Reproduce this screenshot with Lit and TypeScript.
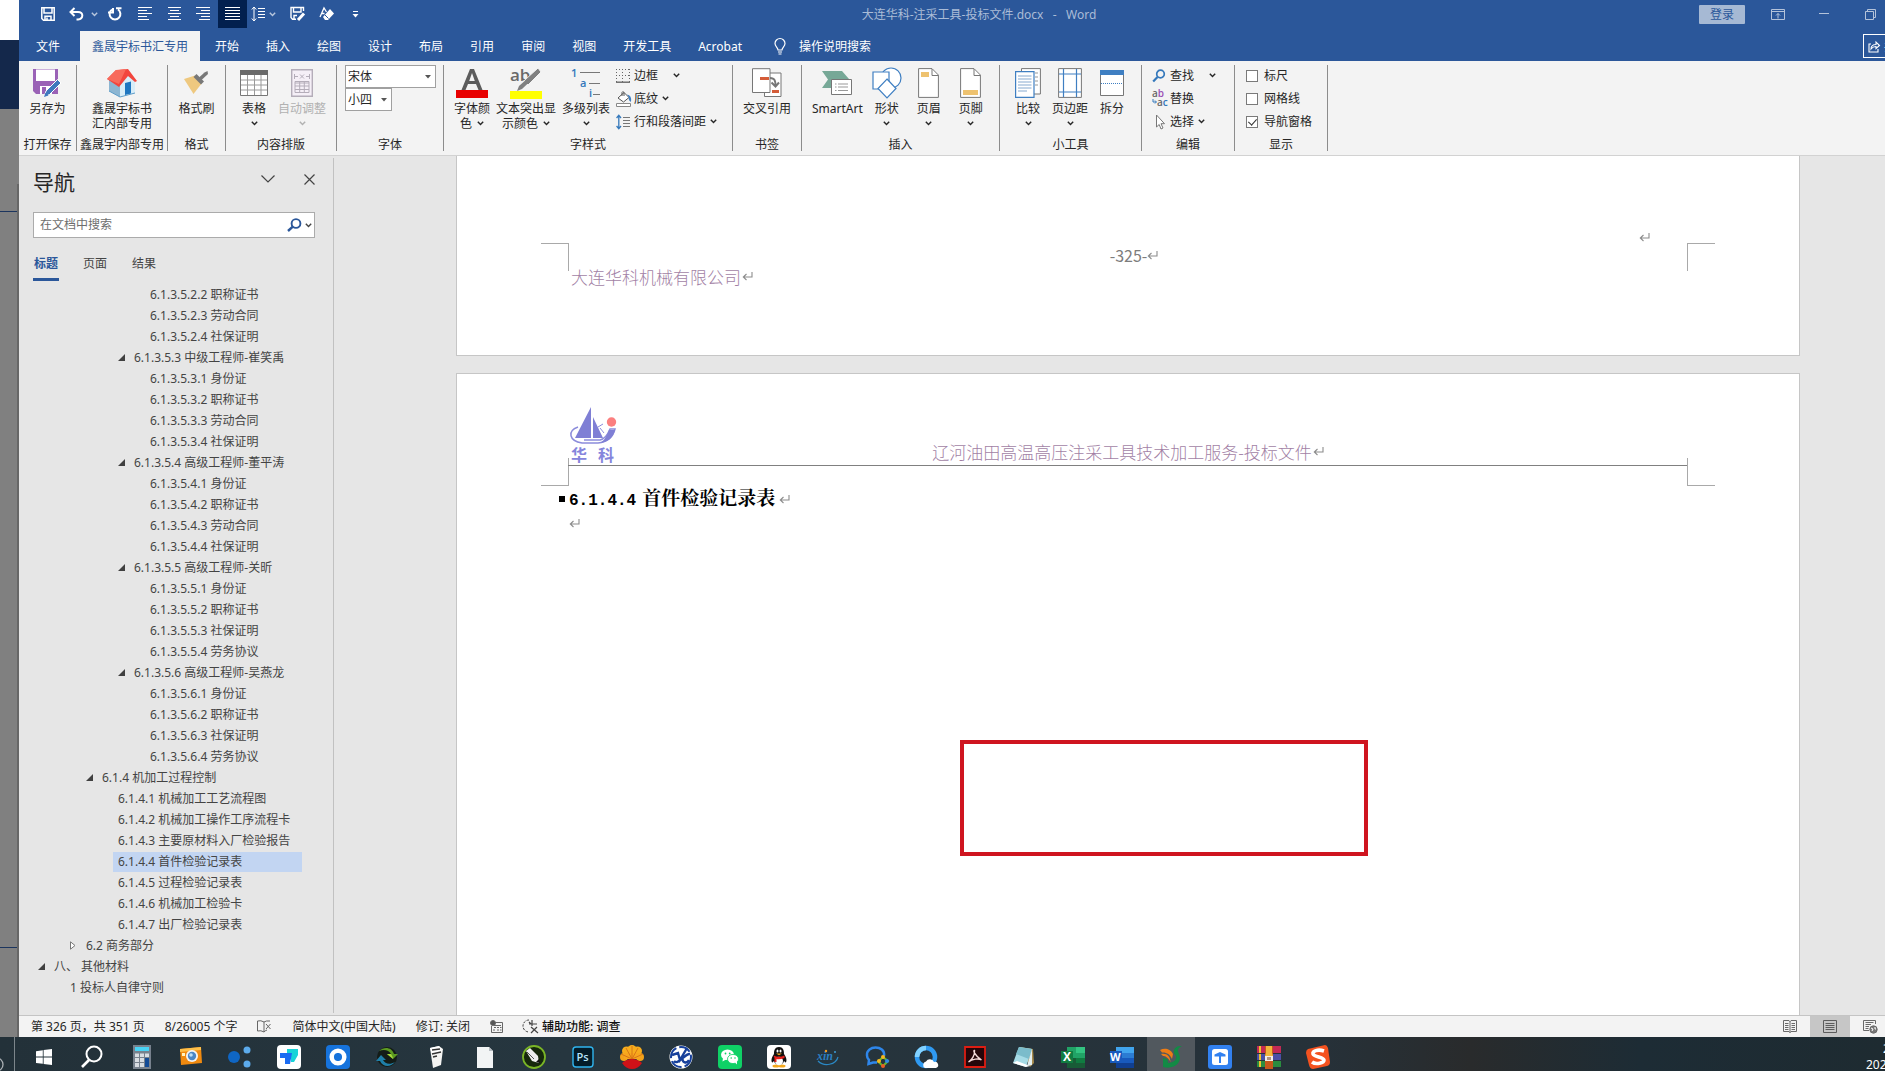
import { LitElement, html, css } from "lit";
import { customElement } from "lit/decorators.js";
import { classMap } from "lit/directives/class-map.js";

const chev = html`<svg class="chev" width="7" height="5" viewBox="0 0 7 5"><path d="M.8.8 3.5 3.6 6.2.8" fill="none" stroke="currentColor" stroke-width="1.4"/></svg>`;
const ret = html`<svg class="ret" width="11" height="11" viewBox="0 0 11 11"><path d="M10 1V6H1.5M4.5 3 1.3 6 4.5 9" fill="none" stroke="#8c8c8c" stroke-width="1.1"/></svg>`;

const lines = (rows: number[][]) => html`<svg width="15" height="14" viewBox="0 0 15 14" stroke="#fff" stroke-width="1">
  <path d=${rows.map(([a, b], i) => `M${a} ${i * 3 + 0.5}H${b}`).join("")} /></svg>`;

const quick = {
  save: html`<svg width="14" height="14" viewBox="0 0 14 14" fill="none" stroke="#fff"><path d="M.8.8H13.2V13.2H2.5L.8 11.5Z" stroke-width="1.5"/><path d="M3 1V6H11V1M4 13V9.3H10V13M6 10.5V13" stroke-width="1.5"/></svg>`,
  undo: html`<svg width="15" height="14" viewBox="0 0 15 14" fill="none" stroke="#fff" stroke-width="2"><path d="M5.5 1 1.5 5 5.5 9M1.5 5H9C15 5 14.500 12 9 12.500H7.500"/></svg>`,
  redo: html`<svg width="14" height="14" viewBox="0 0 14 14" fill="none" stroke="#fff" stroke-width="2"><path d="M4 2.500A5.400 5.400 0 1 0 10 2.500M5 1V5.500H0M8 1.200H13.500"/></svg>`,
  left: lines([[0, 14], [0, 9], [0, 14], [0, 9], [0, 11]]),
  center: lines([[1, 14], [3, 12], [1, 14], [3, 12], [1, 14]]),
  right: lines([[0, 14], [5, 14], [0, 14], [5, 14], [3, 14]]),
  justify: lines([[0, 15], [0, 15], [0, 15], [0, 15], [0, 15]]),
  spacing: html`<svg width="15" height="16" viewBox="0 0 15 16" fill="none" stroke="#fff"><path d="M3 1V15M.8 3.500 3 1 5.200 3.500M.8 12.500 3 15 5.200 12.500M7 2.500H14M7 5.500H14M7 8.500H14M7 11.500H14"/></svg>`,
  edit: html`<svg width="16" height="16" viewBox="0 0 16 16" fill="none" stroke="#fff"><path d="M6 13.200H2.500L1 11.500V1.500H13.500V5M3.500 2V6H11V2M4 13V9.500H7" stroke-width="1.400"/><path d="M8 14 14 7.500" stroke-width="3"/></svg>`,
  eraser: html`<svg width="16" height="15" viewBox="0 0 16 15"><path d="M11 2 15 6.500 9 13 6 13 4 10Z" fill="#fff"/><path d="M1 10 5 1 7.500 5M2.500 6.500H5.500" fill="none" stroke="#fff" stroke-width="1.300"/><path d="M6 8 9.500 11.500" stroke="#2b579a"/></svg>`,
  more: html`<svg width="7" height="7" viewBox="0 0 7 7"><path d="M1 .5H6" stroke="#fff"/><path d="M.5 3H6.500L3.500 6.500Z" fill="#fff"/></svg>`,
};

const rib = {
  saveAs: html`<svg width="30" height="30" viewBox="0 0 30 30"><path d="M1 1H26V26H4L1 23Z" fill="#9a62b6"/><path d="M4 1.500H23V13H4ZM8 18H20V26H8Z" fill="#fff"/><path d="M10 19H14V26H10Z" fill="#9a62b6"/><path d="M12 29 14 23 25.500 11.500 29 15 17.500 26.500Z" fill="#3f78bd" stroke="#fff" stroke-width="1"/><path d="M12 29 13.500 24.500 16.500 27.500Z" fill="#3f78bd"/></svg>`,
  house: html`<svg width="32" height="30" viewBox="0 0 32 30"><path d="M3 12V23L14 29V14L10 6Z" fill="#8db6d2"/><path d="M14 14 22 6 29 14V25L14 29Z" fill="#d8edf8"/><path d="M13 2 22 1 31 13 29 14 22 8 13 19 1 11 10 2Z" fill="#f2453d"/><path d="M10 2 20 1 13 16 1 11Z" fill="#f86a5c"/><path d="M19 27V15L25 13.500V25.500Z" fill="#1e76c0"/><path d="M3 23 14 29 29 25" fill="none" stroke="#5d9cc8"/></svg>`,
  brush: html`<svg width="28" height="26" viewBox="0 0 28 26"><path d="M2 9 13 5.500 20 13 11.500 24Z" fill="#eec87f"/><path d="M11.500 7 14.500 4 22 11.500 19 14.500Z" fill="#787878"/><path d="M17 7.500 22.500 2.500 25.500 1 26 4 19.500 10Z" fill="#787878"/></svg>`,
  table: html`<svg width="28" height="26" viewBox="0 0 28 26"><path d="M.5.5H27.500V25.500H.5Z" fill="#fff" stroke="#777"/><path d="M0 0H28V5H0Z" fill="#6a6a6a"/><path d="M7.500 5V25M14.500 5V25M21 5V25M1 10H27M1 15H27M1 20H27" stroke="#9a9a9a"/></svg>`,
  fit: html`<svg width="22" height="28" viewBox="0 0 22 28" fill="none" stroke="#b4adb9"><path d="M.7.7H21.300V27.300H.7Z" fill="#f5eff7" stroke-width="1.400"/><path d="M4 12.500H18V23.500H4ZM4 14H18M8.700 13V23M13.300 13V23M4 17H18M4 20.500H18M3.500 5V10M18.500 5V10M3.500 7.500H7M15 7.500H18.500M9 5.500 13 9.500M13 5.500 9 9.500"/></svg>`,
  fontColor: html`<svg width="32" height="30" viewBox="0 0 32 30"><path d="M5.500 22 14 1H18L26.500 22H22.500L20 16H12L9.500 22ZM13.200 13H18.800L16 5Z" fill="#5c5c5c"/><path d="M0 22H32V30H0Z" fill="#e80000"/></svg>`,
  highlight: html`<svg width="32" height="32" viewBox="0 0 32 32"><text x="0" y="14" font-family="Open Sans, sans-serif" font-size="17" font-weight="600" fill="#6a6a6a">ab</text><path d="M28 1 31 5 18 18 14 14Z" fill="#808080" stroke="#f3f3f3"/><path d="M27 3 29.500 5.500 12 22 7 24 9 19Z" fill="#808080"/><path d="M0 24H32V32H0Z" fill="#ffff00"/></svg>`,
  multi: html`<svg width="30" height="30" viewBox="0 0 30 30" font-family="Open Sans, sans-serif" font-weight="600" font-size="11" fill="#3478bb"><text x="0" y="9">1</text><text x="9" y="19">a</text><text x="18" y="29">i</text><path d="M9 4.500H29M18 15.500H29M22 26.500H29" stroke="#777"/></svg>`,
  cross: html`<svg width="30" height="30" viewBox="0 0 30 30"><path d="M12.500 5H29V28.500H12.500Z" fill="#fff" stroke="#777"/><path d="M.5.7H18V24.500H.5Z" fill="#fff" stroke="#777"/><path d="M8 9H17V12H8ZM20 22H27V25H20Z" fill="#d45c38"/><path d="M18 10C23 10 23.500 13 23.500 18M19.500 14.500 23.500 18.500 27 14.500" fill="none" stroke="#777" stroke-width="2"/></svg>`,
  smart: html`<svg width="30" height="26" viewBox="0 0 30 26"><path d="M0 1H20L27 9 20 18H0L6 9.500Z" fill="#77a897"/><path d="M9.500 9.500H29.500V24.500H9.500Z" fill="#fff" stroke="#777"/><path d="M13 14H14.500M16 14H26M13 17H14.500M16 17H26M13 20.500H14.500M16 20.500H26" stroke="#999"/></svg>`,
  shape: html`<svg width="30" height="32" viewBox="0 0 30 32" fill="#fff" stroke="#3f7fc2" stroke-width="1.200"><circle cx="19" cy="11" r="10"/><path d="M1 5H17V22H1Z"/><path d="M15 12 24 21.500 15 31 6 21.500Z"/></svg>`,
  head: html`<svg width="21" height="30" viewBox="0 0 21 30"><path d="M.6.6H14L20.400 7V29.400H.6Z" fill="#fff" stroke="#777"/><path d="M14 1V7.500H20" fill="none" stroke="#777"/><path d="M3 4H11V9H3Z" fill="#eec26f"/></svg>`,
  foot: html`<svg width="21" height="30" viewBox="0 0 21 30"><path d="M.6.6H14L20.400 7V29.400H.6Z" fill="#fff" stroke="#777"/><path d="M14 1V7.500H20" fill="none" stroke="#777"/><path d="M3 22H18V27H3Z" fill="#eec26f"/></svg>`,
  compare: html`<svg width="26" height="30" viewBox="0 0 26 30"><path d="M6.500.6H25.400V26H6.500Z" fill="#fff" stroke="#777"/><path d="M20 5H23M20 9H23M20 13H23M20 17H23" stroke="#999"/><path d="M.6 3.600H19V29.400H.6Z" fill="#fff" stroke="#3f7fc2" stroke-width="1.200"/><path d="M3 8H16.500M3 11H16.500M3 14H16.500M3 17H16.500M3 20H16.500M3 23H12" stroke="#86a9cf"/></svg>`,
  margins: html`<svg width="24" height="30" viewBox="0 0 24 30"><path d="M.6.6H23.400V29.400H.6Z" fill="#fff" stroke="#777"/><path d="M5.500 1V29M18.500 1V29M1 6H23M1 24H23" stroke="#3f7fc2" stroke-width="1.200"/></svg>`,
  split: html`<svg width="24" height="26" viewBox="0 0 24 26"><path d="M.5.5H23.500V25.500H.5Z" fill="#fff" stroke="#777"/><path d="M0 0H24V5H0Z" fill="#3f7fc2"/><path d="M1 13.500H23" stroke="#3f7fc2" stroke-dasharray="1 1"/></svg>`,
  border: html`<svg width="14" height="14" viewBox="0 0 14 14" fill="none" stroke="#666"><path d="M0 .5H14M0 6.500H14M.5 0V13M6.500 0V13M13.500 0V13" stroke-dasharray="1 2"/><path d="M0 13.200H14" stroke-width="1.400"/></svg>`,
  fill: html`<svg width="16" height="16" viewBox="0 0 16 16"><path d="M2 7 8 1.500 13 6.500 7.500 11Z" fill="#fff" stroke="#555"/><path d="M6 5V1.500Q7-.5 8 1.500V5" fill="none" stroke="#555"/><path d="M11 3.500Q16 4 15 11Q12 9 13 6.500Z" fill="#3f7fc2"/><path d="M.5 12.500H14.500V15.500H.5Z" fill="#fff" stroke="#888"/></svg>`,
  para: html`<svg width="15" height="16" viewBox="0 0 15 16" fill="none"><path d="M2.800 1V15M.6 4 2.800 1.200 5 4M.6 12 2.800 14.800 5 12" stroke="#3478bb" stroke-width="1.300"/><path d="M7 3.500H14M7 6.500H14M7 9.500H14M7 12.500H14" stroke="#777"/></svg>`,
  find: html`<svg width="14" height="14" viewBox="0 0 14 14" fill="none" stroke="#3478bb"><circle cx="8.500" cy="5" r="3.800" stroke-width="1.700"/><path d="M5.500 8 1.200 12.500" stroke-width="2.200"/></svg>`,
  replace: html`<svg width="17" height="17" viewBox="0 0 17 17" font-family="Open Sans, sans-serif" font-size="10" font-weight="600"><text x="0" y="7" fill="#666">a<tspan fill="#9a4fb5">b</tspan></text><text x="5" y="16" fill="#666">a<tspan fill="#3478bb">c</tspan></text><path d="M1 9V12H4M3 10.500 4.500 12 3 13.500" fill="none" stroke="#3478bb"/></svg>`,
  select: html`<svg width="14" height="16" viewBox="0 0 14 16"><path d="M4.500 1V13L7.200 10.500 9 15 11 14 9 9.700H12.500Z" fill="#fff" stroke="#777"/></svg>`,
};

const seg = (id: string) => {
  switch (id) {
    case "win": return html`<svg viewBox="0 0 24 24" fill="#fff"><path d="M4 6.200 10.800 5.200V11.600H4ZM11.600 5.100 20 4V11.600H11.600ZM4 12.400H10.800V18.800L4 17.900ZM11.600 12.400H20V20L11.600 18.900Z"/></svg>`;
    case "search": return html`<svg viewBox="0 0 24 24" fill="none" stroke="#fff"><circle cx="13" cy="9" r="7.500" stroke-width="2"/><path d="M8 15 1 22" stroke-width="2.600"/></svg>`;
    case "calc": return html`<svg viewBox="0 0 24 24"><path d="M3 0H21V24H3Z" fill="#77818d"/><path d="M5 2H19V6H5Z" fill="#49d3f5"/><path d="M5 8.500H9V12H5ZM10 8.500H14V12H10ZM15 8.500H19V12H15ZM5 13H9V17H5ZM10 13H14V17H10ZM5 18H9V22H5ZM10 18H14V22H10Z" fill="#d8dde2"/><path d="M15 13H19V22H15Z" fill="#124b96"/></svg>`;
    case "cam": return html`<svg viewBox="0 0 24 24"><path d="M1 4 22 2 23 18 2 20Z" fill="#f08a10"/><path d="M1 4 22 2V5L1 7Z" fill="#ffc04a"/><circle cx="13" cy="11" r="6" fill="#f3f3f3"/><circle cx="13" cy="11" r="4.200" fill="#4b86c6"/><circle cx="12" cy="10" r="1.800" fill="#b9dcf5"/><path d="M3 8H6V11H3Z" fill="#fff3c0"/></svg>`;
    case "nodes": return html`<svg viewBox="0 0 24 24"><circle cx="6" cy="12" r="6" fill="#0f66c4"/><circle cx="19" cy="5" r="3.500" fill="#5cabec"/><circle cx="19" cy="19" r="3.500" fill="#5cabec"/></svg>`;
    case "todesk": return html`<svg viewBox="0 0 24 24"><rect width="24" height="24" rx="4" fill="#fff"/><path d="M10 4H21V10L17 17H14V9H10Z" fill="#18d3d8"/><path d="M3 8H15L13 19H8V13H3Z" fill="#1b6cf2"/></svg>`;
    case "ring": return html`<svg viewBox="0 0 24 24"><rect width="24" height="24" rx="4" fill="#1673dc"/><circle cx="12" cy="12" r="6.300" fill="none" stroke="#fff" stroke-width="4.500"/><path d="M11 8H13V10H11ZM11 14H13V16H11Z" fill="#1673dc"/></svg>`;
    case "sync": return html`<svg viewBox="0 0 24 24"><circle cx="12" cy="12" r="10" fill="#141c17"/><path d="M4 6C9 1 17 2 19 9H23L18 14 12 9H16C14 5 9 4 4 6Z" fill="#5c9a22"/><path d="M12 9H16Q18 12 18 14Z" fill="#a6d83a"/><path d="M20 17C15 23 8 22 5 16H1L6 10 11 15H8C10 19 15 20 20 17Z" fill="#1f7fa8"/></svg>`;
    case "book": return html`<svg viewBox="0 0 24 24"><path d="M6 3 15 1 19 4 17 20 9 23Z" fill="#f4f4f2"/><path d="M6 3 15 1 18 6 8 9Z" fill="#fff"/><path d="M8 5 16 4M8 9 17 7M9 12 13 11" stroke="#333" stroke-width="1.400"/></svg>`;
    case "page": return html`<svg viewBox="0 0 24 24"><path d="M4 2H16L20 6V23H4Z" fill="#f2f4f5"/><path d="M16 2V6H20Z" fill="#b7bdc2"/></svg>`;
    case "corel": return html`<svg viewBox="0 0 24 24"><circle cx="12" cy="12" r="11" fill="#16280c" stroke="#7ab526" stroke-width="1.800"/><path d="M4 6 8 3 16 11 17 18 10 16Z" fill="#eee"/><path d="M17 14 18 18 14 17Z" fill="#111"/><path d="M5 7 12 14" stroke="#555"/></svg>`;
    case "ps": return html`<svg viewBox="0 0 24 24"><rect x="2" y="2" width="20" height="20" rx="3" fill="#041c28" stroke="#2fb4ee" stroke-width="1.400"/><text x="5.500" y="16" font-family="Open Sans, sans-serif" font-weight="600" font-size="11" fill="#b8e6fb">Ps</text></svg>`;
    case "petro": return html`<svg viewBox="0 0 24 24"><circle cx="4" cy="12" r="4" fill="#f3a21a"/><circle cx="6.500" cy="6" r="4.500" fill="#f7ac1d"/><circle cx="12" cy="4.500" r="4.500" fill="#f7ac1d"/><circle cx="17.500" cy="6" r="4.500" fill="#f7ac1d"/><circle cx="20" cy="12" r="4" fill="#f3a21a"/><path d="M4 8H20V14H4Z" fill="#f7a51d"/><path d="M12 14 6 3M12 14V1M12 14 18 3M12 14 1 9M12 14 23 9" stroke="#cf6a14" stroke-width=".8"/><path d="M2 18Q12 10 22 18Q18 24 12 24T2 18Z" fill="#d01218"/></svg>`;
    case "seal": return html`<svg viewBox="0 0 24 24"><circle cx="12" cy="12" r="11.500" fill="#fff"/><circle cx="12" cy="12" r="10" fill="none" stroke="#17409b" stroke-width="2" stroke-dasharray="12 3"/><path d="M3 10 9 8 11 15 18 3M5 16C9 21 16 8 21 9M14 12C12 18 18 19 20 15" fill="none" stroke="#17409b" stroke-width="2.400"/></svg>`;
    case "wechat": return html`<svg viewBox="0 0 24 24"><rect width="24" height="24" rx="4" fill="#0fd166"/><ellipse cx="9.500" cy="9.800" rx="6.500" ry="5.300" fill="#fff"/><path d="M5 13 4.500 16.500 9 14Z" fill="#fff"/><ellipse cx="15" cy="14" rx="5.500" ry="4.600" fill="#fff" stroke="#0fd166" stroke-width=".8"/><path d="M17 17.500 19 19.500V16Z" fill="#fff"/><circle cx="7.500" cy="8.500" r=".9" fill="#0fd166"/><circle cx="11.700" cy="8.500" r=".9" fill="#0fd166"/><circle cx="13.200" cy="13" r=".8" fill="#0fd166"/><circle cx="17" cy="13" r=".8" fill="#0fd166"/></svg>`;
    case "qq": return html`<svg viewBox="0 0 24 24"><rect width="24" height="24" rx="4" fill="#fff"/><ellipse cx="9" cy="21" rx="3.500" ry="1.500" fill="#f4a81c"/><ellipse cx="15" cy="21" rx="3.500" ry="1.500" fill="#f4a81c"/><path d="M12 2C7 2 7 7 7 9C4 13 4 17 5.500 17.500L7 16C8 21 16 21 17 16L18.500 17.500C20 17 20 13 17 9C17 7 17 2 12 2Z" fill="#111"/><ellipse cx="12" cy="16" rx="4" ry="4.300" fill="#fff"/><ellipse cx="10.500" cy="6" rx="1" ry="1.500" fill="#fff"/><ellipse cx="13.500" cy="6" rx="1" ry="1.500" fill="#fff"/><path d="M9 8.500H15L12 10.300Z" fill="#f4a81c"/><path d="M6.500 10.500Q12 13 17.500 10.500V13Q12 15 9.500 14V17H7.500V13Z" fill="#e8201c"/></svg>`;
    case "xin": return html`<svg viewBox="0 0 24 24"><text x="1" y="15" font-family="Liberation Serif, serif" font-style="italic" font-weight="700" font-size="12" fill="#2b7fc0">xin</text><path d="M2 16C8 22 20 20 22 12" fill="none" stroke="#2a88c4" stroke-width="1.200"/><circle cx="10" cy="6" r="1.200" fill="#f39a1e"/><circle cx="19" cy="7" r="1" fill="#3d9edb"/></svg>`;
    case "bubble": return html`<svg viewBox="0 0 24 24"><path d="M19 11C20 5 15 2.500 10.500 2.500S1.500 5.500 2 10.500C2 13 4 15 4 15L3.500 19 8 17.500H12" fill="none" stroke="#2e86ea" stroke-width="2.500"/><path d="M18 12 23 16 18 21 13 16.500Z" fill="none" stroke="#63b52f" stroke-width="2"/><circle cx="18" cy="12" r="2" fill="#f7b51e"/><circle cx="22" cy="16" r="2" fill="#2e86ea"/><circle cx="18" cy="21" r="2" fill="#ec5a25"/><circle cx="14" cy="16" r="2" fill="#f7b51e"/></svg>`;
    case "browser": return html`<svg viewBox="0 0 24 24"><circle cx="12" cy="12" r="9" fill="none" stroke="#2f9af2" stroke-width="4.500"/><path d="M3 12A9 9 0 0 1 12 3" fill="none" stroke="#82d2ff" stroke-width="4.500"/><path d="M11 23A3.500 3.500 0 0 1 12 16.500A4.500 4.500 0 0 1 20 17A3 3 0 0 1 22 23Z" fill="#fff"/></svg>`;
    case "pdf": return html`<svg viewBox="0 0 24 24"><path d="M2 2H22V22H2Z" fill="#25060a" stroke="#dd1d12" stroke-width="1.800"/><path d="M5.500 17C9 15 12 10 11.500 5.500C10 5 11 10 18.500 15C16 13 9 14 5.500 17Z" fill="none" stroke="#f5dada" stroke-width="1.400"/></svg>`;
    case "note": return html`<svg viewBox="0 0 24 24"><path d="M8 2 21 4 22 18 18 22Z" fill="#a58a4c"/><path d="M7 2 20 4 14 22 1 18Z" fill="#a5dbe6"/><path d="M7 2 20 4 17 14 4 9Z" fill="#7bbccb"/><path d="M1 18 14 22 18 21 5 16Z" fill="#fff"/><path d="M20 4 20 20 15 21Z" fill="#e3eef0"/></svg>`;
    case "excel": return html`<svg viewBox="0 0 24 24"><path d="M6 2H24V23H6Z" fill="#21a366"/><path d="M15 2H24V8H15Z" fill="#33c481"/><path d="M6 13H15V18H6ZM6 18H24V23H6Z" fill="#185c37"/><path d="M15 13H24V18H15Z" fill="#107c41"/><path d="M0 6H12V18H0Z" fill="#107c41"/><text x="2" y="16" font-family="Open Sans, sans-serif" font-weight="700" font-size="12" fill="#fff">X</text></svg>`;
    case "word": return html`<svg viewBox="0 0 24 24"><path d="M6 2H24V8H6Z" fill="#41a5ee"/><path d="M6 8H24V13H6Z" fill="#2b7cd3"/><path d="M6 13H24V18H6Z" fill="#185abd"/><path d="M6 18H24V23H6Z" fill="#103f91"/><path d="M0 6H12V18H0Z" fill="#185abd"/><text x="0" y="16" font-family="Open Sans, sans-serif" font-weight="700" font-size="11" fill="#fff">W</text></svg>`;
    case "bird": return html`<svg viewBox="0 0 24 24"><path d="M1 5C5 3 11 3 14 9L13 14C11 9 7 7 3 7.500Z" fill="#ee7d16"/><path d="M2 9C8 8 11 11 11.500 17C9 12 6 11 4 11Z" fill="#ee7d16"/><path d="M23 1C14 0 13 8 17 11C18 14 15 18 9 18L8.500 14 4 13V22C15 25 24 17 20 9C18 5 19 3 23 1Z" fill="#138a45"/></svg>`;
    case "tower": return html`<svg viewBox="0 0 24 24"><rect width="24" height="24" rx="3" fill="#3281f0"/><rect x="4" y="4" width="16" height="16" rx="2.500" fill="#fff"/><path d="M6.500 9.500 12 7 17.500 9.500V11.500H13V18H11V11.500H6.500Z" fill="#3281f0"/></svg>`;
    case "rar": return html`<svg viewBox="0 0 24 24"><path d="M0 1H24V8H0Z" fill="#c22a55"/><path d="M0 9H24V15H0Z" fill="#4b50a5"/><path d="M0 16H24V22H0Z" fill="#2a8d3f"/><path d="M2 1H4V8H2ZM2 9H4V15H2ZM2 16H4V22H2Z" fill="#f2c12e"/><path d="M8 1H16V24H8Z" fill="#c4581c"/><path d="M9 1H15V8L16 11H8L9 8Z" fill="#f2b63a"/><path d="M8 11H16V16H8Z" fill="#f3eee6"/><path d="M11 12V15M13 12V15" stroke="#713a1a"/></svg>`;
    default: return html`<svg viewBox="0 0 24 24"><path d="M2 4 19 0Q21 0 22 3L24 17Q24 20 21 21L7 24Q4 24 3 20L0 8Q0 5 2 4Z" fill="#f4521f"/><path d="M18 6C12 4 6 6 7 9S18 12 18 15S10 20 6 17" fill="none" stroke="#fff" stroke-width="3.600"/></svg>`;
  }
};

const apps: [string, string][] = [
  ["win", "开始"], ["search", "搜索"], ["calc", "计算器"], ["cam", "截图"], ["nodes", "节点"], ["todesk", "远程"], ["ring", "助手"],
  ["sync", "同步"], ["book", "文集"], ["page", "文档"], ["corel", "绘图"], ["ps", "Photoshop"], ["petro", "石油"], ["seal", "印章"],
  ["wechat", "微信"], ["qq", "QQ"], ["xin", "xin"], ["bubble", "企业微信"], ["browser", "浏览器"], ["pdf", "Acrobat"], ["note", "记事本"],
  ["excel", "Excel"], ["word", "Word"], ["bird", "标书"], ["tower", "工具"], ["rar", "压缩"], ["sogou", "输入法"],
];

const people = (n: string, head: string, kids: string[]): [number, string, string?][] => [
  [5, `6.1.3.5.${n} ${head}`, "open"],
  ...kids.map((k, i): [number, string] => [6, `6.1.3.5.${n}.${i + 1} ${k}`]),
];
const tree: [number, string, string?][] = [
  [6, "6.1.3.5.2.2 职称证书"], [6, "6.1.3.5.2.3 劳动合同"], [6, "6.1.3.5.2.4 社保证明"],
  ...people("3", "中级工程师-崔笑禹", ["身份证", "职称证书", "劳动合同", "社保证明"]),
  ...people("4", "高级工程师-董平涛", ["身份证", "职称证书", "劳动合同", "社保证明"]),
  ...people("5", "高级工程师-关昕", ["身份证", "职称证书", "社保证明", "劳务协议"]),
  ...people("6", "高级工程师-吴燕龙", ["身份证", "职称证书", "社保证明", "劳务协议"]),
  [3, "6.1.4 机加工过程控制", "open"],
  [4, "6.1.4.1 机械加工工艺流程图"], [4, "6.1.4.2 机械加工操作工序流程卡"], [4, "6.1.4.3 主要原材料入厂检验报告"],
  [4, "6.1.4.4 首件检验记录表", "selected"], [4, "6.1.4.5 过程检验记录表"], [4, "6.1.4.6 机械加工检验卡"], [4, "6.1.4.7 出厂检验记录表"],
  [2, "6.2 商务部分", "closed"], [0, "八、 其他材料", "open"], [1, "1 投标人自律守则"],
];

const tabs = ["开始", "插入", "绘图", "设计", "布局", "引用", "审阅", "视图", "开发工具", "Acrobat"];

@customElement("app-root")
export class AppRoot extends LitElement {
  static styles = css`
    :host { display: flex; flex-direction: column; height: 100vh; overflow: hidden; font-family: "Noto Sans", "Noto Sans CJK SC", sans-serif; font-size: 12px; line-height: 15px; color: #262626; }
    * { box-sizing: border-box; }
    svg { display: block; flex: none; overflow: visible; }
    button { font: inherit; color: inherit; background: none; border: 0; padding: 0; margin: 0; white-space: nowrap; }
    .desktop { flex: 1; min-height: 0; display: flex; }
    .strip { width: 19px; flex: none; display: flex; flex-direction: column; background: #808080; }
    .strip .blank { height: 40px; background: #fff; }
    .strip .navy { height: 69px; background: #14284b; }
    .strip .upper { height: 75px; }
    .strip .lower { flex: 1; display: flex; flex-direction: column; justify-content: space-between; border-right: 2px solid #676767; padding: 27px 0 89px; }
    .strip .rule { height: 1px; background: #1c355e; }
    .window { flex: 1; min-width: 0; display: flex; flex-direction: column; }
    .blue { background: #2b579a; color: #fff; }
    .title { display: grid; grid-template-columns: 1fr auto 1fr; height: 28px; align-items: center; margin-bottom: 3px; }
    .quick { display: flex; align-items: center; padding-left: 14px; }
    .quick button { display: grid; place-items: center; width: 29px; height: 28px; }
    .quick .narrow { width: 7px; color: #b8c7de; }
    .quick .on { background: #02204f; }
    .quick .spacing { width: 22px; }
    .quick .wide { width: 33px; }
    .quick .after { margin-left: 7px; }
    .doc-name { color: #aabcd7; padding-left: 54px; white-space: pre; }
    .controls { display: flex; align-items: center; justify-content: flex-end; color: #b4c3da; }
    .login { width: 46px; height: 19px; margin-right: 10px; background: #a6b9d4; color: #2b579a; border-radius: 1px; }
    .controls .ctl { display: grid; place-items: center; width: 46px; height: 24px; }
    .controls .last { width: 30px; margin-left: 8px; }
    .tabs { display: flex; align-items: stretch; height: 30px; gap: 3px; }
    .tabs button { padding: 0 12px; }
    .tabs .file { padding: 0 17px; }
    .tabs .active { background: #f3f3f3; color: #2b579a; }
    .tabs .tell { display: flex; align-items: center; gap: 13px; margin-left: 17px; padding-left: 0; }
    .tabs .grow { flex: 1; }
    .tabs .share { width: 22px; height: 24px; margin-top: 3px; padding: 0 0 0 4px; border: 1px solid #fff; border-right: 0; display: flex; align-items: center; gap: 4px; overflow: hidden; }
    .ribbon { display: flex; background: #f3f3f3; border-bottom: 1px solid #d2d2d2; height: 95px; padding: 4px 0; }
    .group { display: flex; flex-direction: column; border-right: 1px solid #8c8c8c; flex: none; height: 86px; }
    .group h3 { margin: 0; font: inherit; line-height: 12px; text-align: center; white-space: nowrap; }
    .body { flex: 1; display: flex; justify-content: center; }
    .w58 { width: 58px; } .w69 { width: 69px; } .w91 { width: 91px; } .w93 { width: 93px; } .w107 { width: 107px; } .w111 { width: 111px; }
    .w142 { width: 142px; } .w198 { width: 198px; } .w289 { width: 289px; }
    .start { justify-content: flex-start; padding-left: 7px; }
    .big { min-width: 42px; padding: 0 3px; display: flex; flex-direction: column; align-items: center; }
    .big .ico { height: 36px; display: grid; place-items: center; }
    .big .ln { display: flex; align-items: center; gap: 5px; height: 15px; }
    .big:disabled { color: #b1b1b1; }
    .stack { display: flex; flex-direction: column; margin: -1px 0 0 3px; }
    .small { display: flex; align-items: center; height: 23px; text-align: left; gap: 4px; }
    .small .pic { width: 14px; display: grid; place-items: center; }
    .small.spread .chev { margin-left: 11px; }
    .combos { align-items: flex-start; flex-direction: column; justify-content: flex-start; padding-left: 8px; }
    .combo { display: grid; align-items: center; border: 1px solid #a0a0a0; background: #fff; height: 23px; width: 47px; }
    .combo.long { width: 91px; }
    .combo > * { grid-area: 1 / 1; }
    .combo select { appearance: none; border: 0; background: none; font: inherit; color: #262626; padding: 0 0 0 2px; width: 100%; outline: 0; }
    .combo svg { justify-self: end; margin-right: 4px; pointer-events: none; }
    .check { display: flex; align-items: center; gap: 6px; height: 23px; padding-left: 1px; white-space: nowrap; }
    .check input { appearance: none; margin: 0; width: 12px; height: 12px; border: 1px solid #7a7a7a; background: #fff; display: grid; place-items: center; }
    .check input:checked::before { content: ""; width: 4px; height: 7px; border: solid #333; border-width: 0 1px 1px 0; transform: rotate(42deg); margin-top: -2px; }
    .main { flex: 1; min-height: 0; display: flex; background: #e6e6e6; }
    .nav { width: 315px; flex: none; margin: 2px 0; padding: 0 18px 0 14px; border-right: 1px solid #c1c1c1; color: #444; }
    .nav header { display: flex; align-items: center; height: 48px; margin-bottom: 6px; gap: 29px; }
    .nav header button { margin-bottom: 6px; }
    .nav h2 { margin: 0; flex: 1; font-size: 21px; line-height: 28px; font-weight: 400; color: #262626; }
    .search { display: flex; align-items: center; height: 26px; background: #fff; border: 1px solid #ababab; padding-right: 2px; gap: 3px; }
    .search input { flex: 1; min-width: 0; border: 0; outline: 0; background: none; font: inherit; padding: 0 0 2px 6px; }
    .search input::placeholder { color: #6d6d6d; opacity: 1; }
    .views { display: flex; gap: 23px; margin: 14px 0 3px; }
    .views button { height: 29px; line-height: 24px; padding: 0 1px 2px; border-bottom: 3px solid transparent; display: flex; align-items: flex-start; }
    .views .cur { color: #2b579a; font-weight: 700; border-color: #2b579a; }
    .tree { list-style: none; margin: 0; padding: 0 13px 0 0; }
    .tree li { height: 21px; display: flex; align-items: center; }
    .tree .tw { width: 7px; flex: none; margin-right: 4px; }
    .tree a { color: inherit; text-decoration: none; line-height: 20px; padding-left: 5px; flex: 1; white-space: nowrap; }
    .tree .selected a { background: #c2d5f2; }
    .l0 { padding-left: 5px; } .l1 { padding-left: 21px; } .l2 { padding-left: 37px; } .l3 { padding-left: 53px; }
    .l4 { padding-left: 69px; } .l5 { padding-left: 85px; } .l6 { padding-left: 101px; }
    .doc { flex: 1; min-width: 0; position: relative; overflow: hidden; display: flex; flex-direction: column; gap: 17px; padding: 0 85px 0 122px; }
    .page { background: #fff; border: 1px solid #c6c6c6; padding: 0 84px; display: grid; grid-template-columns: 28px minmax(0, 1fr) 28px; align-items: start; }
    .page.first { border-top: 0; height: 200px; flex: none; padding-top: 72px; }
    .page.second { flex: 1; border-bottom: 0; padding-top: 32px; }
    .mark { height: 28px; border: 0 solid #a9a9a9; }
    .first .mark { margin-top: 15px; border-top-width: 1px; }
    .second .mark { margin-top: 52px; border-bottom-width: 1px; }
    .mark.lf { border-right-width: 1px; }
    .mark.rt { border-left-width: 1px; }
    .line { display: flex; align-items: center; height: 18px; }
    .line.end { justify-content: flex-end; padding-right: 37px; }
    .line.mid { justify-content: center; padding-left: 12px; font-size: 16px; color: #7d7d7d; font-family: "Noto Sans CJK SC", sans-serif; }
    .line.kai { font-family: "Noto Sans CJK SC", sans-serif; font-size: 17px; font-weight: 300; color: #a27fa5; }
    .line.foot { height: 24px; padding-left: 2px; gap: 1px; }
    .page-head { display: grid; height: 60px; border-bottom: 1px solid #808080; margin: 0 -1px; }
    .page-head > * { grid-area: 1 / 1; }
    .brand { width: 48px; margin: 1px 0 0 2px; }
    .line.running { align-self: end; justify-content: center; height: 28px; gap: 1px; }
    .heading { margin: 21px 0 0 -10px; display: flex; align-items: center; height: 24px; font-size: 19px; gap: 4px; color: #000; font-family: "Noto Serif CJK SC", "Noto Sans CJK SC", sans-serif; }
    .heading .sq { width: 6px; height: 6px; background: #000; }
    .heading .num { font-family: "Liberation Mono", monospace; font-size: 16px; margin-right: 6px; }
    .line.next { height: 24px; }
    .callout { position: absolute; left: 626px; top: 584px; width: 408px; height: 116px; border: 4px solid #cf1520; }
    .status { height: 22px; flex: none; border-top: 1px solid #c4c4c4; background: #f3f3f3; display: flex; align-items: center; padding-left: 12px; white-space: nowrap; }
    .status > span { margin-right: 20px; }
    .status .acc { font-weight: 500; display: flex; gap: 3px; align-items: center; color: #111; }
    .status .grow { flex: 1; margin: 0; }
    .status button { width: 40px; height: 21px; display: grid; place-items: center; }
    .status .last { width: 35px; padding-left: 5px; }
    .status .cur { background: #c6c6c6; }
    .taskbar { height: 34px; flex: none; overflow: hidden; display: flex; background: linear-gradient(90deg, #233139, #26363f 30%, #263139 70%, #292b2c 78%, #1d2c35 87%, #1e2b31); }
    .taskbar .edge { width: 14px; flex: none; border-right: 1px solid #7d868b; box-sizing: content-box; margin-right: 5px; overflow: hidden; }
    .taskbar .edge svg { margin: 20px 0 0 -11px; }
    .taskbar button { width: 48px; margin-right: 1px; height: 40px; flex: none; display: grid; place-items: center; }
    .taskbar button svg { width: 24px; height: 24px; }
    .taskbar .active { background: #51585e; }
    .clock { flex: 1; color: #fff; display: flex; flex-direction: column; align-items: flex-end; line-height: 19px; padding-top: 2px; overflow: hidden; white-space: nowrap; }
    .clock .t { width: 2px; overflow: hidden; }
    .clock .d { width: 19px; overflow: hidden; }
  `;

  private big(icon: unknown, first: string, second = "", arrow = false, disabled = false) {
    return html`<button class="big" ?disabled=${disabled}>
      <span class="ico">${icon}</span><span class="ln">${first}</span>
      ${second || arrow ? html`<span class="ln">${second}${arrow ? chev : null}</span>` : null}
    </button>`;
  }

  private small(icon: unknown, label: string, arrow = true, spread = false) {
    return html`<button class=${classMap({ small: true, spread })}><span class="pic">${icon}</span>${label}${arrow ? chev : null}</button>`;
  }

  private combo(id: string, label: string, value: string, long: boolean) {
    return html`<div class=${classMap({ combo: true, long })}>
      <select id=${id} aria-label=${label}><option>${value}</option></select>
      <svg width="6" height="4" viewBox="0 0 6 4"><path d="M0 0H6L3 3.500Z" fill="#555"/></svg></div>`;
  }

  render() {
    return html`
      <div class="desktop">
        <div class="strip"><div class="blank"></div><div class="navy"></div><div class="upper"></div>
          <div class="lower"><div class="rule"></div><div class="rule"></div></div></div>
        <div class="window">
          <div class="blue">
            <div class="title">
              <div class="quick">
                <button aria-label="保存">${quick.save}</button><button aria-label="撤消">${quick.undo}</button>
                <button class="narrow" aria-label="撤消列表">${chev}</button><button class="wide" aria-label="重复">${quick.redo}</button>
                <button aria-label="左对齐">${quick.left}</button><button aria-label="居中">${quick.center}</button>
                <button aria-label="右对齐">${quick.right}</button><button class="on" aria-label="两端对齐">${quick.justify}</button>
                <button class="spacing" aria-label="行距">${quick.spacing}</button><button class="narrow" aria-label="行距列表">${chev}</button>
                <button class="after" aria-label="另存">${quick.edit}</button><button aria-label="清除格式">${quick.eraser}</button>
                <button aria-label="更多">${quick.more}</button>
              </div>
              <div class="doc-name">大连华科-注采工具-投标文件.docx   -   Word</div>
              <div class="controls">
                <button class="login">登录</button>
                <button class="ctl" aria-label="功能区选项"><svg width="14" height="11" viewBox="0 0 14 11" fill="none" stroke="currentColor"><path d="M.5.5H13.500V10.500H.5ZM.5 2.500H13.500M7 9.500V4.500M5 6.500 7 4.500 9 6.500"/></svg></button>
                <button class="ctl" aria-label="最小化"><svg width="10" height="2"><path d="M0 .5H10" stroke="currentColor"/></svg></button>
                <button class="ctl last" aria-label="还原"><svg width="11" height="11" viewBox="0 0 11 11" fill="none" stroke="currentColor"><path d="M.5 2.500H8.500V10.500H.5ZM2.500 2.500V.5H10.500V8.500H8.500"/></svg></button>
              </div>
            </div>
            <nav class="tabs">
              <button class="file">文件</button><button class="active">鑫晟宇标书汇专用</button>
              ${tabs.map((t) => html`<button>${t}</button>`)}
              <button class="tell"><svg width="12" height="17" viewBox="0 0 12 17" fill="none" stroke="#fff" stroke-width="1.200"><path d="M4 12C4 9.500 1 8.500 1 5.500A5 5 0 0 1 11 5.500C11 8.500 8 9.500 8 12ZM4 14H8M4.500 16H7.500"/></svg>操作说明搜索</button>
              <span class="grow"></span>
              <button class="share"><svg width="12" height="13" viewBox="0 0 12 13" fill="none" stroke="#fff" stroke-width="1.100"><path d="M3 4H1V12H10V9M3 9C3 6 5 4.500 8 4.500V2L11.500 5.500 8 8.500V6.500C6 6.500 4.500 7 3 9Z"/></svg>共享</button>
            </nav>
          </div>
          <div class="ribbon">
            <section class="group w58"><div class="body">${this.big(rib.saveAs, "另存为")}</div><h3>打开保存</h3></section>
            <section class="group w91"><div class="body">${this.big(rib.house, "鑫晟宇标书", "汇内部专用")}</div><h3>鑫晟宇内部专用</h3></section>
            <section class="group w58"><div class="body">${this.big(rib.brush, "格式刷")}</div><h3>格式</h3></section>
            <section class="group w111"><div class="body start">${this.big(rib.table, "表格", "", true)}${this.big(rib.fit, "自动调整", "", true, true)}</div><h3>内容排版</h3></section>
            <section class="group w107"><div class="body combos">${this.combo("font", "字体", "宋体", true)}${this.combo("size", "字号", "小四", false)}</div><h3>字体</h3></section>
            <section class="group w289"><div class="body start">
              ${this.big(rib.fontColor, "字体颜", "色", true)}${this.big(rib.highlight, "文本突出显", "示颜色", true)}${this.big(rib.multi, "多级列表", "", true)}
              <div class="stack">${this.small(rib.border, "边框", true, true)}${this.small(rib.fill, "底纹")}${this.small(rib.para, "行和段落间距")}</div>
            </div><h3>字样式</h3></section>
            <section class="group w69"><div class="body">${this.big(rib.cross, "交叉引用")}</div><h3>书签</h3></section>
            <section class="group w198"><div class="body start">${this.big(rib.smart, "SmartArt")}${this.big(rib.shape, "形状", "", true)}${this.big(rib.head, "页眉", "", true)}${this.big(rib.foot, "页脚", "", true)}</div><h3>插入</h3></section>
            <section class="group w142"><div class="body start">${this.big(rib.compare, "比较", "", true)}${this.big(rib.margins, "页边距", "", true)}${this.big(rib.split, "拆分")}</div><h3>小工具</h3></section>
            <section class="group w93"><div class="body start"><div class="stack">${this.small(rib.find, "查找", true, true)}${this.small(rib.replace, "替换", false)}${this.small(rib.select, "选择")}</div></div><h3>编辑</h3></section>
            <section class="group w93"><div class="body start"><div class="stack">
              ${["标尺", "网格线", "导航窗格"].map((t, i) => html`<label class="check"><input type="checkbox" .checked=${i === 2}>${t}</label>`)}
            </div></div><h3>显示</h3></section>
          </div>
          <div class="main">
            <aside class="nav">
              <header><h2>导航</h2>
                <button aria-label="任务窗格选项"><svg width="14" height="8" viewBox="0 0 14 8"><path d="M.5.5 7 7 13.500.5" fill="none" stroke="#444" stroke-width="1.200"/></svg></button>
                <button aria-label="关闭"><svg width="11" height="11" viewBox="0 0 11 11"><path d="M.5.5 10.500 10.500M10.500.5.5 10.500" stroke="#444" stroke-width="1.200"/></svg></button>
              </header>
              <div class="search"><input type="text" aria-label="在文档中搜索" placeholder="在文档中搜索">
                <svg width="15" height="14" viewBox="0 0 15 14" fill="none" stroke="#2b579a"><circle cx="9" cy="5.500" r="4.400" stroke-width="1.900"/><path d="M5.800 8.700 1 13" stroke-width="2.400"/></svg>${chev}</div>
              <div class="views"><button class="cur">标题</button><button>页面</button><button>结果</button></div>
              <ul class="tree">
                ${tree.map(([lv, text, st]) => html`<li class=${"l" + lv + (st === "selected" ? " selected" : "")}>
                  <span class="tw">${st === "open" ? html`<svg width="7" height="7"><path d="M7 0V7H0Z" fill="#404040"/></svg>`
                    : st === "closed" ? html`<svg width="6" height="9" viewBox="0 0 6 9"><path d="M.5.8 5 4.500.5 8.200Z" fill="#fff" stroke="#777"/></svg>` : null}</span>
                  <a href="#">${text}</a></li>`)}
              </ul>
            </aside>
            <main class="doc">
              <section class="page first">
                <div class="mark lf"></div>
                <div>
                  <div class="line end">${ret}</div>
                  <div class="line mid">-325-${ret}</div>
                  <div class="line foot kai">大连华科机械有限公司${ret}</div>
                </div>
                <div class="mark rt"></div>
              </section>
              <section class="page second">
                <div class="mark lf"></div>
                <div>
                  <div class="page-head">
                    <svg class="brand" width="48" height="58" viewBox="0 0 48 58">
                      <path d="M21 0V31H5Z M23 10 33 31H23Z" fill="#7f7fd5"/>
                      <path d="M8 20C-3 24-1 34 12 36H28C38 35 43 30 45 22H40C38 27 35 32 30 33H14" fill="none" stroke="#8c8cdb" stroke-width="1.500"/>
                      <path d="M45 23C43 31 38 35 30 36C35 33 37 28 39 23Z" fill="#7f7fd5"/><path d="M28 20 33 17M30 21 34 26" stroke="#8c8cdb"/>
                      <circle cx="41.500" cy="15" r="4.700" fill="#fb7f7f"/>
                      <text x="1" y="54" font-family="Noto Sans CJK SC, sans-serif" font-weight="700" font-size="16" fill="#8585dc">华</text>
                      <text x="28" y="54" font-family="Noto Sans CJK SC, sans-serif" font-weight="700" font-size="16" fill="#8585dc">科</text>
                    </svg>
                    <div class="line running kai">辽河油田高温高压注采工具技术加工服务-投标文件${ret}</div>
                  </div>
                  <h1 class="heading"><span class="sq"></span><span><span class="num">6.1.4.4</span>首件检验记录表</span>${ret}</h1>
                  <div class="line next">${ret}</div>
                </div>
                <div class="mark rt"></div>
              </section>
              <div class="callout"></div>
            </main>
          </div>
          <footer class="status">
            <span>第 326 页，共 351 页</span><span>8/26005 个字</span>
            <span><svg width="15" height="13" viewBox="0 0 15 13" fill="none" stroke="#666"><path d="M7 2V12M7 2Q4 0 .5 1V11Q4 10 7 12Q9 10 10 10M7 2Q9 .5 13 1M9 4 13.500 9M13.500 4 9 9"/></svg></span>
            <span>简体中文(中国大陆)</span><span>修订: 关闭</span>
            <span><svg width="13" height="13" viewBox="0 0 13 13" fill="none" stroke="#666"><path d="M5 2.500H12.500V12.500H1.500V6M4 5.500H11M4 7.500H6M7 7.500H9M10 7.500H11.500M3 10H5M7 10H9M10 10H11.500"/><circle cx="3" cy="3" r="2.500" fill="#555"/></svg></span>
            <span class="acc"><svg width="16" height="15" viewBox="0 0 16 15" fill="none" stroke="#444"><path d="M6 1A6 6 0 0 0 6 13" stroke-dasharray="2.500 1.200"/><path d="M6 3 8 5M6 5H14M9 1V7M8 8 15 14M14 8 8 14" stroke-width="1.200"/></svg>辅助功能: 调查</span>
            <span class="grow"></span>
            <button aria-label="阅读视图"><svg width="14" height="13" viewBox="0 0 14 13" fill="none" stroke="#6a6a6a"><path d="M.5.500H6L7 1.500 8 .5H13.500V11.500H8L7 12.500 6 11.500H.5ZM7 1V13M2 3.500H5.500M2 5.500H5.500M2 7.500H5.500M2 9.500H5.500M8.500 3.500H12M8.500 5.500H12M8.500 7.500H12M8.500 9.500H12"/></svg></button>
            <button class="cur" aria-label="页面视图"><svg width="14" height="13" viewBox="0 0 14 13" fill="none" stroke="#5c5c5c"><path d="M.5.500H13.500V12.500H.5ZM2.500 3.500H11.500M2.500 5.500H11.500M2.500 7.500H11.500M2.500 9.500H11.500"/></svg></button>
            <button class="last" aria-label="Web 版式"><svg width="15" height="14" viewBox="0 0 15 14" fill="none" stroke="#6a6a6a"><path d="M6 10.500H.5V.5H12.500V4M2.500 2.500H10.500M2.500 4.500H8M2.500 6.500H6M2.500 8.500H5.500"/><circle cx="10.500" cy="9.500" r="3.700" fill="#777"/><path d="M8 8 10 9 9 11M12 7V9H13" stroke="#fff"/></svg></button>
          </footer>
        </div>
      </div>
      <div class="taskbar">
        <div class="edge"><svg width="15" height="15" viewBox="0 0 15 15"><circle cx="7.500" cy="7.500" r="6.500" fill="none" stroke="#a9afb3" stroke-width="1.300"/></svg></div>
        ${apps.map(([id, name]) => html`<button class=${classMap({ active: id === "bird" })} aria-label=${name}>${seg(id)}</button>`)}
        <div class="clock"><span class="t">2</span><span class="d">202</span></div>
      </div>`;
  }
}
